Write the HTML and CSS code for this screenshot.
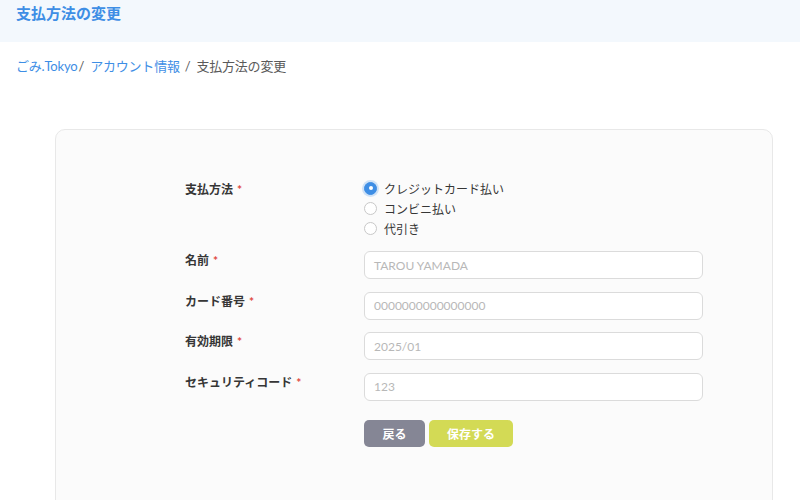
FILE: index.html
```html
<!DOCTYPE html>
<html lang="ja">
<head>
<meta charset="utf-8">
<link rel="stylesheet" href="styles.css">
</head>
<body>
<header class="topbar">
  <h1 class="title">支払方法の変更</h1>
</header>
<nav class="crumbs">
  <a class="crumb-link">ごみ.Tokyo</a><span class="sep sep-tight">/</span>
  <a class="crumb-link">アカウント情報</a><span class="sep">/</span>
  <span class="crumb-current">支払方法の変更</span>
</nav>
<main class="card">
  <form class="form">
    <div class="row row-radio">
      <div class="label">支払方法<span class="req">*</span></div>
      <div class="field radios">
        <label class="radio"><span class="dot checked"></span>クレジットカード払い</label>
        <label class="radio"><span class="dot"></span>コンビニ払い</label>
        <label class="radio"><span class="dot"></span>代引き</label>
      </div>
    </div>
    <div class="row">
      <div class="label">名前<span class="req">*</span></div>
      <div class="field"><div class="input">TAROU YAMADA</div></div>
    </div>
    <div class="row">
      <div class="label">カード番号<span class="req">*</span></div>
      <div class="field"><div class="input">0000000000000000</div></div>
    </div>
    <div class="row">
      <div class="label">有効期限<span class="req">*</span></div>
      <div class="field"><div class="input">2025/01</div></div>
    </div>
    <div class="row">
      <div class="label">セキュリティコード<span class="req">*</span></div>
      <div class="field"><div class="input">123</div></div>
    </div>
    <div class="row row-buttons">
      <div class="label"></div>
      <div class="field buttons">
        <span class="btn btn-back">戻る</span>
        <span class="btn btn-save">保存する</span>
      </div>
    </div>
  </form>
</main>
</body>
</html>
```
FILE: styles.css
```css
* { box-sizing: border-box; }
html, body { margin: 0; padding: 0; }
body {
  width: 800px;
  height: 500px;
  overflow: hidden;
  background: #ffffff;
  font-family: Lato, "Noto Sans CJK JP", sans-serif;
  color: #363636;
}
.topbar {
  height: 42px;
  background: #f3f8fd;
  padding: 3px 16px 0;
}
.title {
  margin: 0;
  font-size: 15px;
  font-weight: 700;
  color: #3e8ee5;
  line-height: 20px;
}
.crumbs {
  padding: 0 16px;
  margin-top: 14px;
  font-size: 13px;
  line-height: 20px;
  display: flex;
  align-items: center;
  letter-spacing: -0.2px;
}
.crumb-link { color: #3e8ee5; }
.crumb-current { color: #5a5a5a; }
.sep { color: #5a5a5a; margin: 0 6px 0 5px; }
.sep-tight { margin: 0 6px 0 1px; }
.card {
  margin: 53px 27px 0 55px;
  height: 400px;
  background: #fbfbfb;
  border: 1px solid #e8e8e8;
  border-radius: 10px;
  padding: 48px 68px 0 129px;
}
.form { display: flex; flex-direction: column; }
.row {
  display: grid;
  grid-template-columns: 179px 339px;
  margin-bottom: 12.5px;
}
.row-radio { margin-bottom: 13px; }
.label {
  font-size: 12px;
  font-weight: 700;
  color: #363636;
  line-height: 16px;
  padding-top: 2px;
}
.row-radio .label { padding-top: 4px; }
.req { color: #e0463d; margin-left: 4px; }
.radios { display: flex; flex-direction: column; }
.radio {
  display: flex;
  align-items: center;
  height: 20px;
  font-size: 12px;
  color: #363636;
}
.dot {
  width: 13px;
  height: 13px;
  border-radius: 50%;
  border: 1px solid #c8c8c8;
  background: #fff;
  margin-right: 7px;
  position: relative;
}
.dot.checked {
  border: 1px solid #3e8ee5;
  background: #3e8ee5;
  box-shadow: 0 0 0 2px #cfe2f7;
}
.dot.checked::after {
  content: "";
  position: absolute;
  left: 3.5px;
  top: 3.5px;
  width: 4px;
  height: 4px;
  border-radius: 50%;
  background: #fff;
}
.input {
  height: 28px;
  border: 1px solid #dbdbdb;
  border-radius: 6px;
  background: #fff;
  font-size: 12px;
  color: #b8b8b8;
  padding: 0 9px;
  display: flex;
  align-items: center;
}
.row-buttons { margin-top: 7px; }
.buttons { display: flex; gap: 4px; }
.btn {
  height: 27px;
  border-radius: 5px;
  color: #fff;
  font-size: 12px;
  font-weight: 700;
  display: flex;
  align-items: center;
  justify-content: center;
}
.btn-back { width: 61px; background: #858695; }
.btn-save { width: 84px; background: #d3da55; }
```
